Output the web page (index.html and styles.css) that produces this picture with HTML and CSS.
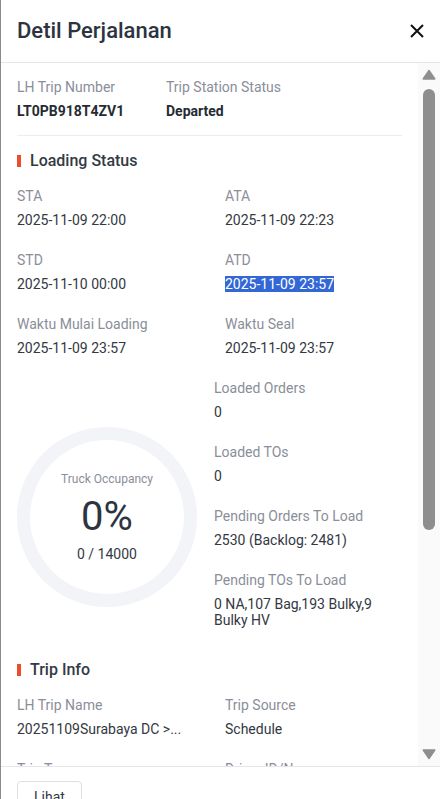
FILE: index.html
```html
<!DOCTYPE html>
<html lang="id">
<head>
<meta charset="utf-8">
<title>Detil Perjalanan</title>
<link rel="stylesheet" href="styles.css">
</head>
<body>
<div class="drawer">
  <header class="drawer-header">
    <h1 class="drawer-title">Detil Perjalanan</h1>
    <button class="close-btn" aria-label="Tutup">
      <svg width="14" height="14" viewBox="0 0 14 14"><path d="M1 1 L13 13 M13 1 L1 13" stroke="#111" stroke-width="2" fill="none"/></svg>
    </button>
  </header>
  <div class="drawer-body">
    <div class="scroll-content">
      <div class="top-row">
        <div class="field top-first">
          <div class="label">LH Trip Number</div>
          <div class="value bold">LT0PB918T4ZV1</div>
        </div>
        <div class="field">
          <div class="label">Trip Station Status</div>
          <div class="value bold">Departed</div>
        </div>
      </div>
      <div class="divider"></div>

      <div class="section-title">Loading Status</div>
      <div class="grid">
        <div class="field"><div class="label">STA</div><div class="value">2025-11-09 22:00</div></div>
        <div class="field"><div class="label">ATA</div><div class="value">2025-11-09 22:23</div></div>
        <div class="field"><div class="label">STD</div><div class="value">2025-11-10 00:00</div></div>
        <div class="field"><div class="label">ATD</div><div class="value"><span class="selected">2025-11-09 23:57</span></div></div>
        <div class="field"><div class="label">Waktu Mulai Loading</div><div class="value">2025-11-09 23:57</div></div>
        <div class="field"><div class="label">Waktu Seal</div><div class="value">2025-11-09 23:57</div></div>
      </div>

      <div class="occupancy">
        <div class="occ-left">
          <div class="ring">
            <div class="ring-label">Truck Occupancy</div>
            <div class="ring-percent">0%</div>
            <div class="ring-sub">0 / 14000</div>
          </div>
        </div>
        <div class="occ-list">
          <div class="field"><div class="label">Loaded Orders</div><div class="value">0</div></div>
          <div class="field"><div class="label">Loaded TOs</div><div class="value">0</div></div>
          <div class="field"><div class="label">Pending Orders To Load</div><div class="value">2530 (Backlog: 2481)</div></div>
          <div class="field"><div class="label">Pending TOs To Load</div><div class="value">0 NA,107 Bag,193 Bulky,9 Bulky HV</div></div>
        </div>
      </div>

      <div class="section-title trip-info">Trip Info</div>
      <div class="grid">
        <div class="field"><div class="label">LH Trip Name</div><div class="value nowrap">20251109Surabaya DC &gt;...</div></div>
        <div class="field"><div class="label">Trip Source</div><div class="value">Schedule</div></div>
        <div class="field"><div class="label">Trip Type</div><div class="value">Normal</div></div>
        <div class="field"><div class="label">Driver ID/Name</div><div class="value">-</div></div>
      </div>
    </div>
    <div class="scrollbar">
      <svg class="sb-arrow" width="14" height="11" viewBox="0 0 14 11"><path d="M7 1.5 L12.8 10 L1.2 10 Z" fill="#8e8e8e" stroke="#8e8e8e" stroke-width="1.5" stroke-linejoin="round"/></svg>
      <div class="sb-thumb"></div>
      <svg class="sb-arrow sb-down" width="14" height="11" viewBox="0 0 14 11"><path d="M1.2 1 L12.8 1 L7 9.5 Z" fill="#8e8e8e" stroke="#8e8e8e" stroke-width="1.5" stroke-linejoin="round"/></svg>
    </div>
  </div>
  <footer class="drawer-footer">
    <button class="btn">Lihat</button>
  </footer>
</div>
</body>
</html>
```
FILE: styles.css
```css
* { box-sizing: border-box; }
html, body { margin: 0; padding: 0; background: #fff; }
body {
  font-family: Roboto, "Liberation Sans", Arial, sans-serif;
  color: #333842;
  font-size: 14px;
}
.drawer {
  width: 440px;
  height: 799px;
  border-left: 1px solid #8a8a8a;
  display: flex;
  flex-direction: column;
  overflow: hidden;
}
.drawer-header {
  flex: 0 0 63px;
  border-bottom: 1px solid #e4e6eb;
  display: flex;
  align-items: center;
  justify-content: space-between;
  padding: 0 16px 0 16px;
}
.drawer-title {
  margin: 0;
  font-size: 22px;
  font-weight: 500;
  color: #2d3340;
  line-height: 28px;
}
.close-btn {
  border: 0;
  background: none;
  padding: 0;
  width: 14px;
  height: 14px;
  display: flex;
}
.drawer-body {
  flex: 1 1 auto;
  min-height: 0;
  display: flex;
  overflow: hidden;
}
.scroll-content {
  flex: 1 1 auto;
  min-width: 0;
  padding: 14px 16px 0 16px;
  overflow: hidden;
}
.top-row { display: flex; }
.top-first { width: 149px; flex: 0 0 149px; }
.label {
  color: #8a8e99;
  line-height: 20px;
  font-size: 14px;
}
.value {
  margin-top: 6px;
  line-height: 16px;
  color: #333842;
}
.bold { font-weight: 700; color: #262b33; }
.nowrap { white-space: nowrap; }
.selected { background: #3367d6; color: #fff; }
.divider {
  margin-top: 16px;
  height: 1px;
  background: #ebedf0;
}
.section-title {
  margin-top: 13px;
  display: flex;
  align-items: center;
  font-size: 16px;
  font-weight: 500;
  line-height: 24px;
  color: #333a45;
}
.section-title::before {
  content: "";
  width: 4px;
  height: 12px;
  background: #ee4d2d;
  margin-right: 9px;
}
.section-title.trip-info { margin-top: 30px; }
.grid {
  margin-top: 13px;
  display: grid;
  grid-template-columns: 208px 1fr;
  row-gap: 22px;
}
.occupancy {
  margin-top: 22px;
  display: flex;
}
.occ-left { flex: 0 0 197px; }
.ring {
  margin-top: 49px;
  width: 180px;
  height: 180px;
  border-radius: 50%;
  border: 13px solid #f3f4f8;
  display: flex;
  flex-direction: column;
  align-items: center;
  justify-content: center;
}
.ring-label {
  font-size: 12px;
  line-height: 16px;
  color: #8a8e99;
}
.ring-percent {
  margin-top: 8px;
  font-size: 40px;
  line-height: 44px;
  color: #2d3340;
}
.ring-sub {
  margin-top: 5px;
  font-size: 14px;
  line-height: 20px;
  color: #333842;
}
.occ-list {
  flex: 1 1 auto;
  display: flex;
  flex-direction: column;
  gap: 22px;
}
.scrollbar {
  flex: 0 0 22px;
  background: #fafafa;
  display: flex;
  flex-direction: column;
  align-items: center;
  padding: 6px 0;
}
.sb-arrow { display: block; flex: 0 0 auto; }
.sb-thumb {
  margin-top: 9px;
  width: 12px;
  height: 441px;
  border-radius: 6px;
  background: #8e8e8e;
  flex: 0 0 auto;
}
.sb-down { margin-top: auto; }
.drawer-footer {
  flex: 0 0 33px;
  border-top: 1px solid #e4e6eb;
  padding: 14px 16px 0 16px;
  overflow: hidden;
}
.btn {
  height: 32px;
  padding: 0 16px;
  border: 1px solid #dcdfe4;
  border-radius: 4px;
  background: #fff;
  font-family: Roboto, "Liberation Sans", Arial, sans-serif;
  font-size: 14px;
  color: #333842;
}
```
